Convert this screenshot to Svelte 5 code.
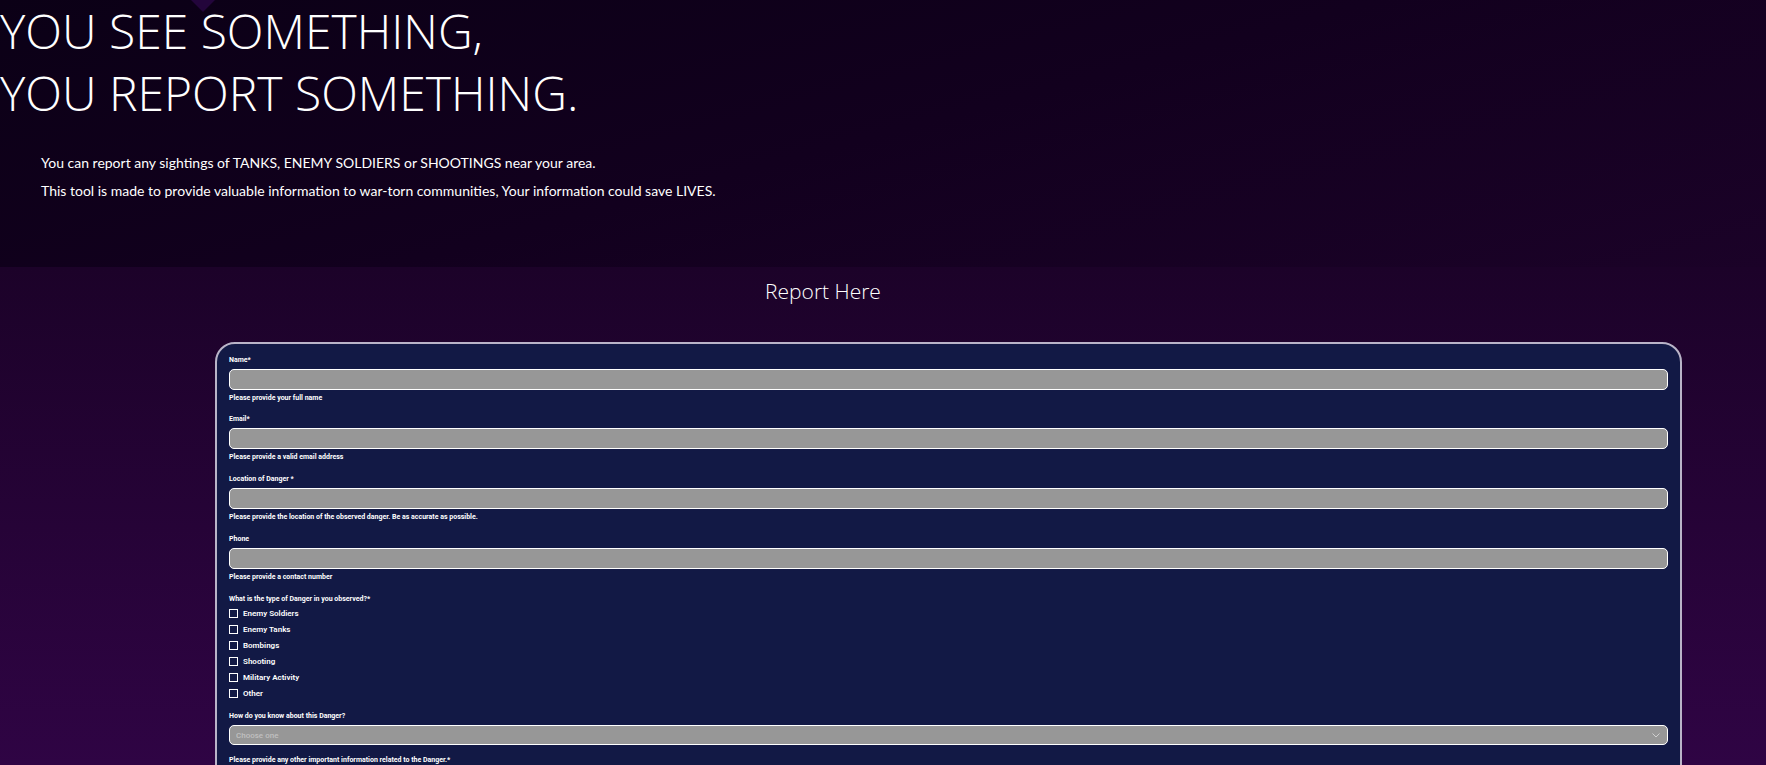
<script>
  const fields = [
    { id: 'name', label: 'Name*', help: 'Please provide your full name', type: 'text' },
    { id: 'email', label: 'Email*', help: 'Please provide a valid email address', type: 'email' },
    {
      id: 'location',
      label: 'Location of Danger *',
      help: 'Please provide the location of the observed danger. Be as accurate as possible.',
      type: 'text'
    },
    { id: 'phone', label: 'Phone', help: 'Please provide a contact number', type: 'tel' }
  ];
  const dangers = ['Enemy Soldiers', 'Enemy Tanks', 'Bombings', 'Shooting', 'Military Activity', 'Other'];
</script>

<div class="page">
  <header class="hero">
    <svg class="marker" width="24" height="12" viewBox="0 0 24 12" aria-hidden="true">
      <path d="M0 0H24L12 12Z" fill="#23053b" />
    </svg>
    <h1>YOU SEE SOMETHING,<br />YOU REPORT SOMETHING.</h1>
    <div class="intro">
      <p>You can report any sightings of TANKS, ENEMY SOLDIERS or SHOOTINGS near your area.</p>
      <p>This tool is made to provide valuable information to war-torn communities, Your information could save LIVES.</p>
    </div>
  </header>

  <main>
    <h2>Report Here</h2>
    <form>
      {#each fields as field}
        <div class="field">
          <label for={field.id}>{field.label}</label>
          <input class="box" id={field.id} type={field.type} aria-describedby="{field.id}-help" />
          <small id="{field.id}-help">{field.help}</small>
        </div>
      {/each}

      <fieldset>
        <legend>What is the type of Danger in you observed?*</legend>
        {#each dangers as danger}
          <label class="option"><input type="checkbox" value={danger} />{danger}</label>
        {/each}
      </fieldset>

      <div class="field compact">
        <label for="source">How do you know about this Danger?</label>
        <div class="select">
          <select class="box" id="source">
            <option>Choose one</option>
          </select>
          <svg width="8" height="5" viewBox="0 0 8 5" aria-hidden="true">
            <path d="M0.5 0.5L4 4L7.5 0.5" fill="none" stroke="#d0d0d0" />
          </svg>
        </div>
      </div>

      <div class="field">
        <label for="details">Please provide any other important information related to the Danger.*</label>
        <textarea class="box" id="details" rows="5"></textarea>
      </div>
    </form>
  </main>
</div>

<style>
  :global(body) {
    margin: 0;
    background: #2f0444;
  }

  .page {
    display: flex;
    flex-direction: column;
    height: 100vh;
    overflow: hidden;
    color: #fff;
    font-family: Lato, sans-serif;
  }

  .hero {
    position: relative;
    flex: none;
    padding-bottom: 62px;
    background: linear-gradient(165deg, #0b0016 0%, #12001e 50%, #1b0228 100%);
  }

  .marker {
    position: absolute;
    top: 0;
    left: 191px;
  }

  h1,
  h2 {
    font-family: "Open Sans", sans-serif;
    font-weight: 300;
  }

  h1 {
    position: relative;
    margin: 0;
    font-size: 48px;
    line-height: 62px;
  }

  .intro {
    padding: 25px 41px 0;
    font-size: 14px;
    line-height: 28px;
  }

  p {
    margin: 0;
  }

  main {
    flex: 1;
    min-height: 0;
    background: linear-gradient(#1c0229, #2f0444);
  }

  h2 {
    margin: 0 120px 35px 0;
    padding-top: 8px;
    font-size: 21px;
    line-height: 32px;
    text-align: center;
  }

  form {
    display: flex;
    flex-direction: column;
    margin: 0 84px 0 215px;
    padding: 11px 12px;
    border: 2px solid #b9b4c8;
    border-radius: 20px;
    background: #121945;
    font-family: Roboto, sans-serif;
    font-size: 7px;
    font-weight: 700;
    line-height: 11px;
  }

  .field {
    display: flex;
    flex-direction: column;
    gap: 3px;
    margin-bottom: 11px;
  }

  .field:first-child,
  .compact {
    margin-bottom: 10px;
  }

  small {
    font-size: 7px;
  }

  .box {
    box-sizing: border-box;
    width: 100%;
    height: 21px;
    margin: 0;
    padding: 0 6px;
    border: 1px solid #fff;
    border-radius: 5px;
    background: #979797;
    color: #c0c0c0;
    font-family: inherit;
    font-size: 8px;
    font-weight: 500;
  }

  textarea.box {
    height: 80px;
  }

  select.box {
    height: 20px;
    appearance: none;
  }

  .select {
    display: grid;
    align-items: center;
  }

  .select > * {
    grid-area: 1 / 1;
  }

  .select svg {
    justify-self: end;
    margin-right: 8px;
    pointer-events: none;
  }

  fieldset {
    display: flex;
    flex-direction: column;
    margin: 0 0 10px;
    padding: 0;
    border: 0;
  }

  legend {
    padding: 0;
  }

  .option {
    display: flex;
    align-items: center;
    gap: 5px;
    height: 16px;
    font-size: 8px;
    font-weight: 600;
  }

  .option input {
    box-sizing: border-box;
    width: 9px;
    height: 9px;
    margin: 0;
    border: 1px solid #fff;
    appearance: none;
  }

  .option input:checked {
    background: #fff;
  }
</style>
